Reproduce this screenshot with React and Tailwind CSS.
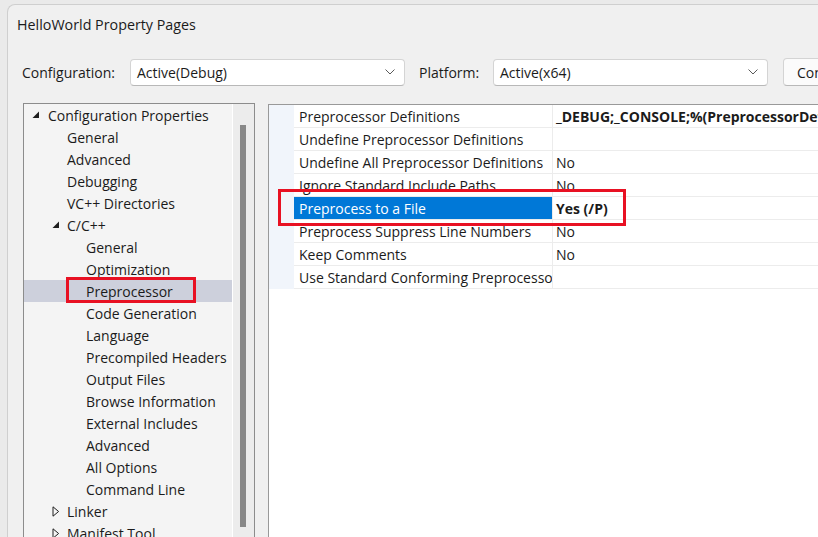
import React from "react";

const tree = [
  { label: "Configuration Properties", level: 0, exp: "open" },
  { label: "General", level: 1 },
  { label: "Advanced", level: 1 },
  { label: "Debugging", level: 1 },
  { label: "VC++ Directories", level: 1 },
  { label: "C/C++", level: 1, exp: "open" },
  { label: "General", level: 2 },
  { label: "Optimization", level: 2 },
  { label: "Preprocessor", level: 2, selected: true },
  { label: "Code Generation", level: 2 },
  { label: "Language", level: 2 },
  { label: "Precompiled Headers", level: 2 },
  { label: "Output Files", level: 2 },
  { label: "Browse Information", level: 2 },
  { label: "External Includes", level: 2 },
  { label: "Advanced", level: 2 },
  { label: "All Options", level: 2 },
  { label: "Command Line", level: 2 },
  { label: "Linker", level: 1, exp: "closed" },
  { label: "Manifest Tool", level: 1, exp: "closed" },
];

const props = [
  { name: "Preprocessor Definitions", value: "_DEBUG;_CONSOLE;%(PreprocessorDefinitions)", bold: true },
  { name: "Undefine Preprocessor Definitions", value: "" },
  { name: "Undefine All Preprocessor Definitions", value: "No" },
  { name: "Ignore Standard Include Paths", value: "No" },
  { name: "Preprocess to a File", value: "Yes (/P)", bold: true, selected: true },
  { name: "Preprocess Suppress Line Numbers", value: "No" },
  { name: "Keep Comments", value: "No" },
  { name: "Use Standard Conforming Preprocessor", value: "" },
];

// tree content starts at x=24
const indent = ["pl-[24px]", "pl-[43px]", "pl-[62px]"];
const arrowPos = ["left-[8px]", "left-[28px]", "left-[47px]"];

function Expander({ kind }) {
  if (kind === "open") {
    return (
      <svg width="8" height="8" viewBox="0 0 8 8" className="block">
        <path d="M7 0.5 L7 7 L0.5 7 Z" fill="#1e1e1e" />
      </svg>
    );
  }
  return (
    <svg width="8" height="11" viewBox="0 0 8 11" className="block">
      <path d="M1 0.8 L6.6 5.5 L1 10.2 Z" fill="none" stroke="#1e1e1e" strokeWidth="1" />
    </svg>
  );
}

function Combo({ text, width }) {
  return (
    <div className={`${width} shrink-0 h-[27px] bg-white border border-[#d4d4d4] border-b-[#b8b8b8] rounded-[4px] flex items-center pl-[6px] pr-[9px]`}>
      <span className="flex-1">{text}</span>
      <svg width="10" height="6" viewBox="0 0 10 6">
        <path d="M0.5 0.5 L5 5 L9.5 0.5" fill="none" stroke="#5a5a5a" strokeWidth="1" />
      </svg>
    </div>
  );
}

export default function App() {
  return (
    <div
      className="w-[818px] h-[537px] overflow-hidden bg-[#eaeaea] text-[#1b1b1b] text-[14px] relative"
      style={{ fontFamily: '"Segoe UI", "Open Sans", sans-serif' }}
    >
      <div className="ml-[7px] mt-[4px] h-[540px] bg-[#f0f0f0] border-l border-t border-[#cfcfcf] rounded-tl-[8px] flex flex-col">
        <div className="h-[39px] pl-[9px] flex items-center text-[14.3px]">HelloWorld Property Pages</div>

        <div className="mt-[14px] pl-[14px] flex items-center whitespace-nowrap">
          <span className="w-[108px] shrink-0">Configuration:</span>
          <Combo text="Active(Debug)" width="w-[275px]" />
          <span className="ml-[14px] w-[74px] shrink-0">Platform:</span>
          <Combo text="Active(x64)" width="w-[275px]" />
          <div className="ml-[15px] h-[28px] w-[180px] shrink-0 bg-[#fbfbfb] border border-[#d4d4d4] border-b-[#b8b8b8] rounded-[4px] flex items-center pl-[13px]">
            Configuration Manager...
          </div>
        </div>

        <div className="mt-[17px] pl-[15px] flex flex-1 min-h-0">
          <div className="w-[232px] shrink-0 border-l border-t border-[#8c8c8c] bg-[#f4f4f4] flex relative">
            <div className="w-[208px] whitespace-nowrap">
              {tree.map((t, i) => (
                <div
                  key={i}
                  className={`relative h-[22px] flex items-center ${indent[t.level]} ${t.selected ? "bg-[#cdd0dc]" : ""}`}
                >
                  {t.exp && (
                    <span className={`absolute ${arrowPos[t.level]} top-0 h-full flex items-center`}>
                      <Expander kind={t.exp} />
                    </span>
                  )}
                  {t.label}
                </div>
              ))}
            </div>
            <div className="w-px bg-white" />
            <div className="flex-1 bg-[#ececec] border-r border-[#8c8c8c] pl-[7px] pt-[21px]">
              <div className="w-[6px] h-[402px] bg-[#888888]" />
            </div>
            <div className="absolute left-[42px] top-[173px] w-[130px] h-[26px] border-[3px] border-[#e81123]" />
          </div>

          <div className="ml-[13px] mt-[1px] flex-1 border-l border-t border-[#999999] bg-white relative overflow-hidden">
            <div className="flex whitespace-nowrap">
              <div className="w-[25px] shrink-0 bg-[#f1f5fb]" />
              <div className="flex-1">
                {props.map((p, i) => (
                  <div key={i} className="h-[23px] flex border-b border-[#ececec]">
                    <div
                      className={`w-[258px] shrink-0 pl-[5px] flex items-center overflow-hidden ${p.selected ? "bg-[#0078d7] text-white" : ""}`}
                    >
                      {p.name}
                    </div>
                    <div className={`flex-1 border-l border-[#ececec] pl-[3px] flex items-center ${p.bold ? "font-bold" : ""}`}>
                      {p.value}
                    </div>
                  </div>
                ))}
              </div>
            </div>
            <div className="absolute left-[9px] top-[84px] w-[348px] h-[37px] border-[3px] border-[#e81123]" />
          </div>
        </div>
      </div>
    </div>
  );
}
